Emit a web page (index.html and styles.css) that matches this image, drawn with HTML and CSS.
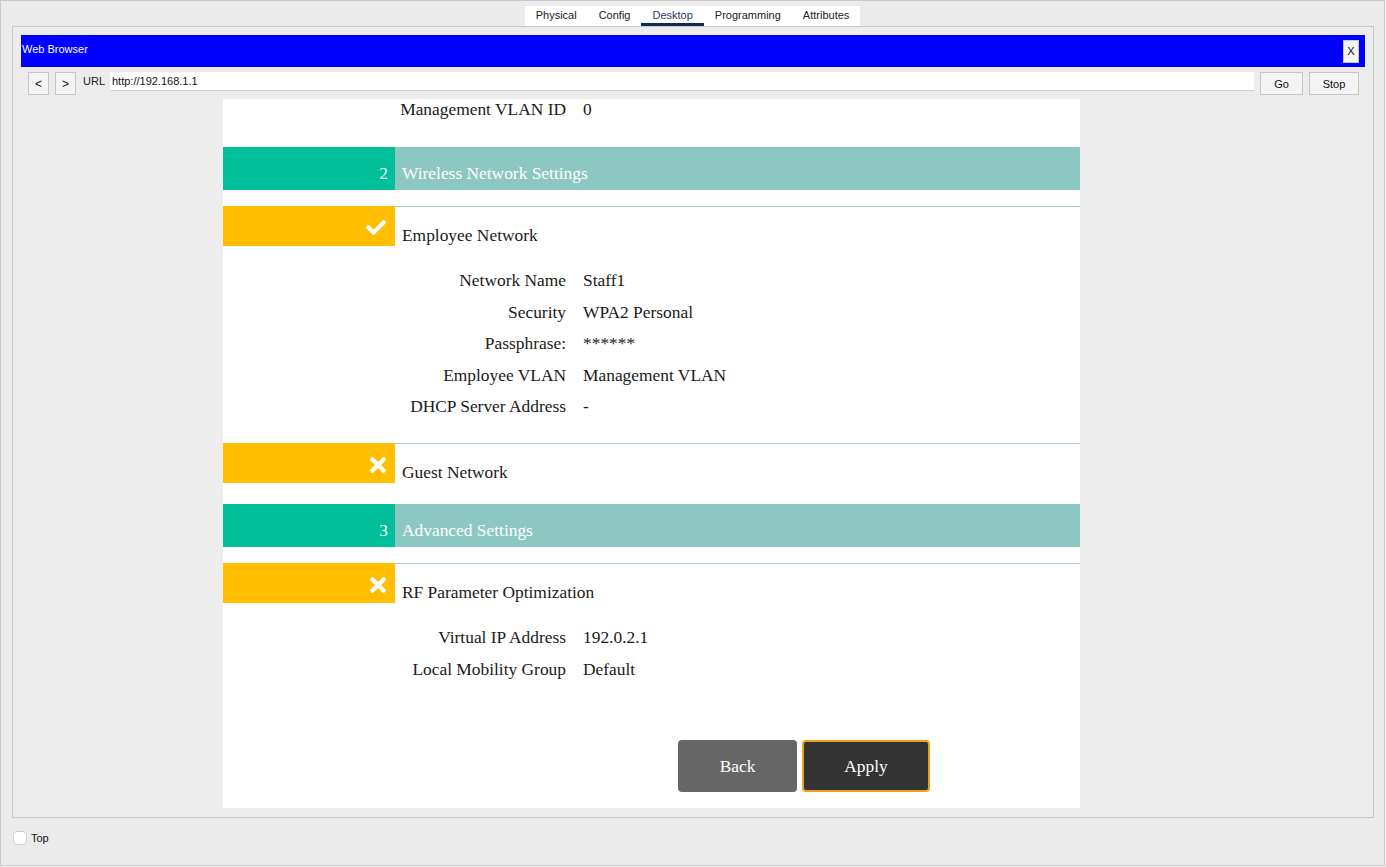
FILE: index.html
```html
<!DOCTYPE html>
<html>
<head>
<meta charset="utf-8">
<title>Web Browser</title>
<link rel="stylesheet" href="styles.css">
</head>
<body>
<div class="app">
  <div class="tabs">
    <span class="tab">Physical</span>
    <span class="tab">Config</span>
    <span class="tab active">Desktop</span>
    <span class="tab">Programming</span>
    <span class="tab">Attributes</span>
  </div>
  <div class="panel">
    <div class="titlebar">
      <span class="title">Web Browser</span>
      <span class="close">X</span>
    </div>
    <div class="urlrow">
      <span class="btn nav">&lt;</span>
      <span class="btn nav">&gt;</span>
      <span class="urllabel">URL</span>
      <span class="urlinput">http://192.168.1.1</span>
      <span class="btn go">Go</span>
      <span class="btn stop">Stop</span>
    </div>
    <div class="viewport">
      <div class="page">
        <div class="fields first">
          <div class="lbl">Management VLAN ID</div><div class="val">0</div>
        </div>

        <div class="section s2">
          <div class="num">2</div>
          <div class="stitle">Wireless Network Settings</div>
        </div>

        <div class="sub s-emp">
          <div class="flag">
            <svg width="20" height="15" viewBox="0 64 512 384"><path fill="#fff" d="M173.898 439.404l-166.4-166.4c-9.997-9.997-9.997-26.206 0-36.204l36.203-36.204c9.997-9.998 26.207-9.998 36.204 0L192 312.69 432.095 72.596c9.997-9.997 26.207-9.997 36.204 0l36.203 36.204c9.997 9.997 9.997 26.206 0 36.204l-294.4 294.401c-9.998 9.997-26.207 9.997-36.204-.001z"/></svg>
          </div>
          <div class="subtitle">Employee Network</div>
        </div>

        <div class="fields block">
          <div class="lbl">Network Name</div><div class="val">Staff1</div>
          <div class="lbl">Security</div><div class="val">WPA2 Personal</div>
          <div class="lbl">Passphrase:</div><div class="val">******</div>
          <div class="lbl">Employee VLAN</div><div class="val">Management VLAN</div>
          <div class="lbl">DHCP Server Address</div><div class="val">-</div>
        </div>

        <div class="sub s-guest">
          <div class="flag">
            <svg width="16" height="16" viewBox="0 80 352 352"><path fill="#fff" d="M242.72 256l100.07-100.07c12.28-12.28 12.28-32.19 0-44.48l-22.24-22.24c-12.28-12.28-32.19-12.28-44.48 0L176 189.28 75.93 89.21c-12.28-12.28-32.19-12.28-44.48 0L9.21 111.45c-12.28 12.28-12.28 32.19 0 44.48L109.28 256 9.21 356.07c-12.28 12.28-12.28 32.19 0 44.48l22.24 22.24c12.28 12.28 32.2 12.28 44.48 0L176 322.72l100.07 100.07c12.28 12.28 32.2 12.28 44.48 0l22.24-22.24c12.28-12.28 12.28-32.19 0-44.48L242.72 256z"/></svg>
          </div>
          <div class="subtitle">Guest Network</div>
        </div>

        <div class="section s3">
          <div class="num">3</div>
          <div class="stitle">Advanced Settings</div>
        </div>

        <div class="sub s-rf">
          <div class="flag">
            <svg width="16" height="16" viewBox="0 80 352 352"><path fill="#fff" d="M242.72 256l100.07-100.07c12.28-12.28 12.28-32.19 0-44.48l-22.24-22.24c-12.28-12.28-32.19-12.28-44.48 0L176 189.28 75.93 89.21c-12.28-12.28-32.19-12.28-44.48 0L9.21 111.45c-12.28 12.28-12.28 32.19 0 44.48L109.28 256 9.21 356.07c-12.28 12.28-12.28 32.19 0 44.48l22.24 22.24c12.28 12.28 32.2 12.28 44.48 0L176 322.72l100.07 100.07c12.28 12.28 32.2 12.28 44.48 0l22.24-22.24c12.28-12.28 12.28-32.19 0-44.48L242.72 256z"/></svg>
          </div>
          <div class="subtitle">RF Parameter Optimization</div>
        </div>

        <div class="fields block">
          <div class="lbl">Virtual IP Address</div><div class="val">192.0.2.1</div>
          <div class="lbl">Local Mobility Group</div><div class="val">Default</div>
        </div>

        <div class="actions">
          <span class="pbtn back">Back</span>
          <span class="pbtn apply">Apply</span>
        </div>
      </div>
    </div>
  </div>
  <div class="bottom">
    <span class="check"></span>
    <span class="toplabel">Top</span>
  </div>
</div>
</body>
</html>
```

FILE: styles.css
```css
* { box-sizing: border-box; }

html, body {
  margin: 0;
  padding: 0;
  background: #f2f2f2;
}

body {
  font-family: "Liberation Sans", Arial, sans-serif;
  font-size: 11px;
  color: #222;
}

.app {
  width: 1385px;
  height: 866px;
  border: 1px solid #c9c9c9;
  background: #ebebeb;
  display: flex;
  flex-direction: column;
}

/* tabs */
.tabs {
  align-self: center;
  margin-top: 5px;
  height: 20px;
  background: #fff;
  display: flex;
}

.tab {
  padding: 0 11px;
  line-height: 19px;
  height: 20px;
  color: #222;
}

.tab.active {
  color: #1e3c6a;
  border-bottom: 3px solid #0e2b53;
}

/* panel */
.panel {
  margin: 0 10px 0 11px;
  height: 792px;
  border: 1px solid #c8c8c8;
  background: #ececec;
  padding: 8px 8px 0 8px;
  display: flex;
  flex-direction: column;
}

.titlebar {
  height: 32px;
  background: #0000ff;
  display: flex;
  align-items: center;
  justify-content: space-between;
  padding: 0 6px 0 1px;
  color: #fff;
}

.title {
  color: #fff;
  margin-top: -4px;
}

.close {
  width: 16px;
  height: 23px;
  background: #f5f5f5;
  border: 1px solid #c8c8c8;
  color: #111;
  display: flex;
  align-items: center;
  justify-content: center;
  font-size: 11px;
}

.urlrow {
  margin-top: 5px;
  height: 23px;
  display: flex;
  align-items: flex-start;
  padding: 0 6px 0 7px;
}

.btn {
  height: 23px;
  background: #f3f3f3;
  border: 1px solid #c6c6c6;
  display: flex;
  align-items: center;
  justify-content: center;
  color: #111;
}

.nav {
  width: 21px;
  margin-right: 6px;
  font-size: 12px;
}

.urllabel {
  margin-left: 1px;
  line-height: 18px;
  width: 27px;
}

.urlinput {
  flex: 1;
  height: 19px;
  background: #fff;
  border-bottom: 1px solid #cfcfcf;
  line-height: 18px;
  padding-left: 2px;
  color: #111;
}

.go {
  width: 43px;
  margin-left: 6px;
}

.stop {
  width: 50px;
  margin-left: 6px;
}

/* viewport */
.viewport {
  margin-top: 1px;
  flex: 1;
  background: #ededed;
  padding-top: 3px;
}

.page {
  margin-left: 202px;
  width: 857px;
  background: #fff;
  padding-bottom: 16px;
  font-family: "Liberation Serif", "Times New Roman", serif;
  font-size: 17.4px;
  color: #1a1a1a;
}

.fields {
  display: grid;
  grid-template-columns: 343px 1fr;
  column-gap: 17px;
  row-gap: 11.5px;
  line-height: 20px;
}

.fields.block {
  margin-top: 24px;
}

.lbl {
  text-align: right;
}

.section {
  display: flex;
  height: 43px;
  line-height: 20px;
  color: #fff;
}

.s2 { margin-top: 28px; }
.s3 { margin-top: 21px; }

.num {
  width: 172px;
  background: #00bf9a;
  text-align: right;
  padding: 16px 7px 0 0;
}

.stitle {
  flex: 1;
  background: #8cc7c1;
  padding: 16px 0 0 7px;
}

.sub {
  display: flex;
  height: 40px;
  line-height: 20px;
}

.s-emp { margin-top: 16px; }
.s-guest { margin-top: 27px; }
.s-rf { margin-top: 16px; }

.flag {
  width: 172px;
  background: #ffbf00;
  display: flex;
  justify-content: flex-end;
  align-items: flex-start;
  padding: 14px 9px 0 0;
}

.s-guest .flag, .s-rf .flag {
  padding-right: 9px;
}

.subtitle {
  flex: 1;
  border-top: 1px solid #9fd0cb;
  padding: 18px 0 0 7px;
}

.actions {
  margin-top: 61.5px;
  margin-left: 455px;
  display: flex;
  gap: 5px;
}

.pbtn {
  height: 52px;
  display: flex;
  align-items: center;
  justify-content: center;
  color: #fff;
  border-radius: 4px;
}

.back {
  width: 119px;
  background: #666666;
}

.apply {
  width: 128px;
  background: #333333;
  border: 2px solid #f0a11c;
}

/* bottom */
.bottom {
  margin-top: 13px;
  margin-left: 12px;
  display: flex;
  align-items: center;
  height: 14px;
}

.check {
  width: 14px;
  height: 14px;
  background: #fff;
  border: 1px solid #cfcfcf;
  border-radius: 4px;
}

.toplabel {
  margin-left: 4px;
  color: #111;
}
```
